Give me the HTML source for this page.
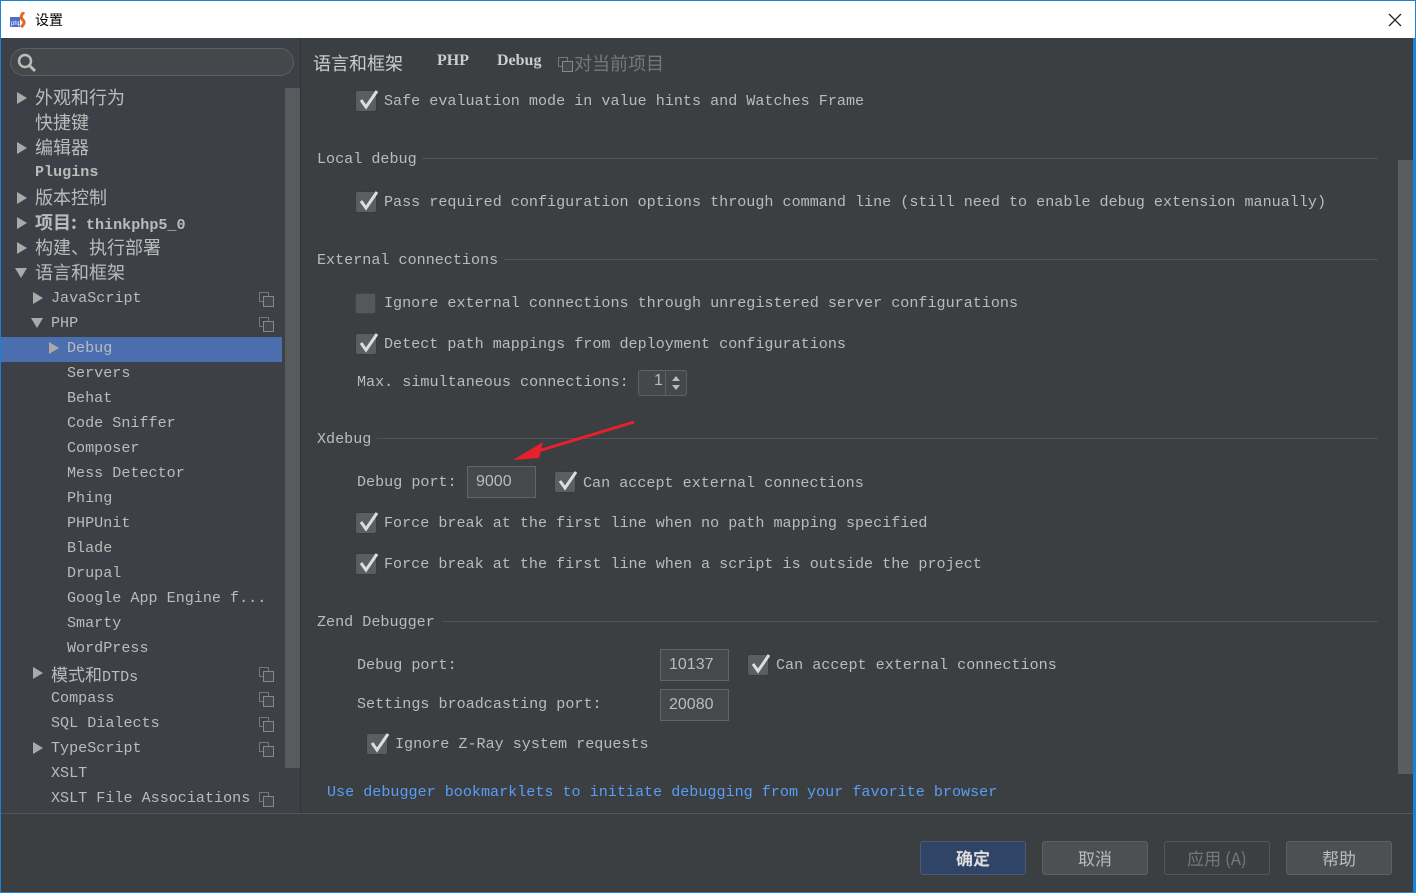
<!DOCTYPE html>
<html><head><meta charset="utf-8"><style>
*{margin:0;padding:0;box-sizing:border-box}
body{width:1416px;height:893px;position:relative;overflow:hidden;background:#3c3f41;font-family:"Liberation Mono","Noto Sans CJK SC",monospace;color:#bbbbbb;font-size:15px}
.a{position:absolute;white-space:nowrap}
#title{left:0;top:0;width:1416px;height:38px;background:#fff;border:1px solid #1883d7;border-bottom:none}
#frame{left:0;top:38px;width:1416px;height:855px;border:1px solid #1883d7;border-top:none}
#side{left:1px;top:38px;width:300px;height:775px;background:#3d4147}
.si{position:absolute;height:25px;line-height:25px;font-size:15.1px}
.cn{font-family:"Noto Sans CJK SC",sans-serif;font-size:18px}
.tri{position:absolute;width:0;height:0;border-top:6px solid transparent;border-bottom:6px solid transparent;border-left:10px solid #aaa}
.trd{position:absolute;width:0;height:0;border-left:6px solid transparent;border-right:6px solid transparent;border-top:10px solid #aaa}
.cp{position:absolute;width:13px;height:13px}
.cp:before{content:"";position:absolute;left:0;top:0;width:8px;height:8px;border:1px solid #777}
.cp:after{content:"";position:absolute;left:4px;top:4px;width:9px;height:9px;border:1px solid #888;background:#45484c}
.cb{position:absolute;width:22px;height:22px;background:#5b5e61;border:1px solid #3a3a3a;border-radius:3px}
.cb svg{position:absolute;left:1px;top:-3px}
.cbe{position:absolute;width:21px;height:21px;background:#55585b;border:1px solid #444;border-radius:3px}
.t{position:absolute;white-space:nowrap;font-size:15.1px}
.sec{position:absolute;height:1px;background:#515456}
.fld{position:absolute;border:1px solid #646464;background:#45494a;color:#bbb;font-size:16px;padding-left:8px;font-family:"Liberation Sans",sans-serif}
.btn{position:absolute;top:841px;width:106px;height:34px;border:1px solid #5e6060;border-radius:3px;background:#4c5052;text-align:center;line-height:32px;font-family:"Noto Sans CJK SC",sans-serif;font-size:17px}
</style></head><body>
<div class="a" id="title">
 <svg style="position:absolute;left:9px;top:11px" width="18" height="16"><rect x="0" y="5" width="10" height="10" fill="#4a6fc9"/><text x="1" y="13" font-size="6" fill="#fff" font-family="Liberation Sans">php</text><path d="M14 0 Q9 5 13 8 Q16 11 11 15" stroke="#e8641e" stroke-width="3" fill="none"/></svg>
 <div class="a" style="left:34px;top:9px;font-family:'Noto Sans CJK SC',sans-serif;font-size:14px;color:#000">设置</div>
 <svg style="position:absolute;left:1387px;top:12px" width="14" height="14"><path d="M1 1L13 13M13 1L1 13" stroke="#222" stroke-width="1.3"/></svg>
</div>
<div class="a" id="frame"></div>
<div class="a" id="side">
 <div class="a" style="left:9px;top:10px;width:284px;height:28px;border:1px solid #5c5f61;border-radius:14px;background:#45484a"></div>
 <svg class="a" style="left:16px;top:15px" width="22" height="20"><circle cx="8" cy="8" r="6" stroke="#bbb" stroke-width="2.5" fill="none"/><path d="M12 12L18 18" stroke="#bbb" stroke-width="3"/></svg>
 <div class="a" style="left:284px;top:50px;width:15px;height:680px;background:#585b5e"></div>
 <div class="a" style="left:299px;top:0;width:1px;height:775px;background:#333"></div>
 <div class="a" style="left:0;top:299px;width:281px;height:25px;background:#4b6eaf"></div>
</div>
<div class="a" style="left:0;top:0">
 <div class="tri" style="left:17px;top:92px"></div><div class="si cn" style="left:35px;top:85px">外观和行为</div>
 <div class="si cn" style="left:35px;top:110px">快捷键</div>
 <div class="tri" style="left:17px;top:142px"></div><div class="si cn" style="left:35px;top:135px">编辑器</div>
 <div class="si" style="left:35px;top:160px;font-weight:bold">Plugins</div>
 <div class="tri" style="left:17px;top:192px"></div><div class="si cn" style="left:35px;top:185px">版本控制</div>
 <div class="tri" style="left:17px;top:217px"></div><div class="si" style="left:35px;top:210px;font-weight:bold"><span class="cn">项目:</span> thinkphp5_0</div>
 <div class="tri" style="left:17px;top:242px"></div><div class="si cn" style="left:35px;top:235px">构建、执行部署</div>
 <div class="trd" style="left:15px;top:268px"></div><div class="si cn" style="left:35px;top:260px">语言和框架</div>
 <div class="tri" style="left:33px;top:292px"></div><div class="si" style="left:51px;top:286px">JavaScript</div><div class="cp" style="left:259px;top:292px"></div>
 <div class="trd" style="left:31px;top:318px"></div><div class="si" style="left:51px;top:311px">PHP</div><div class="cp" style="left:259px;top:317px"></div>
 <div class="tri" style="left:49px;top:342px"></div><div class="si" style="left:67px;top:336px">Debug</div>
 <div class="si" style="left:67px;top:361px">Servers</div>
 <div class="si" style="left:67px;top:386px">Behat</div>
 <div class="si" style="left:67px;top:411px">Code Sniffer</div>
 <div class="si" style="left:67px;top:436px">Composer</div>
 <div class="si" style="left:67px;top:461px">Mess Detector</div>
 <div class="si" style="left:67px;top:486px">Phing</div>
 <div class="si" style="left:67px;top:511px">PHPUnit</div>
 <div class="si" style="left:67px;top:536px">Blade</div>
 <div class="si" style="left:67px;top:561px">Drupal</div>
 <div class="si" style="left:67px;top:586px">Google App Engine f...</div>
 <div class="si" style="left:67px;top:611px">Smarty</div>
 <div class="si" style="left:67px;top:636px">WordPress</div>
 <div class="tri" style="left:33px;top:667px"></div><div class="si" style="left:51px;top:661px"><span class="cn" style="font-size:17px">模式和</span>DTDs</div><div class="cp" style="left:259px;top:667px"></div>
 <div class="si" style="left:51px;top:686px">Compass</div><div class="cp" style="left:259px;top:692px"></div>
 <div class="si" style="left:51px;top:711px">SQL Dialects</div><div class="cp" style="left:259px;top:717px"></div>
 <div class="tri" style="left:33px;top:742px"></div><div class="si" style="left:51px;top:736px">TypeScript</div><div class="cp" style="left:259px;top:742px"></div>
 <div class="si" style="left:51px;top:761px">XSLT</div>
 <div class="si" style="left:51px;top:786px">XSLT File Associations</div><div class="cp" style="left:259px;top:792px"></div>
</div>
<div class="a cn" style="left:313px;top:50px;font-size:18px;color:#ccc">语言和框架</div>
<div class="a" style="left:437px;top:52px;font-size:16px;font-weight:bold;color:#ccc;font-family:'Liberation Serif',serif">PHP</div>
<div class="a" style="left:497px;top:52px;font-size:16px;font-weight:bold;color:#ccc;font-family:'Liberation Serif',serif">Debug</div>
<div class="cp" style="left:558px;top:57px"></div>
<div class="a cn" style="left:574px;top:50px;font-size:18px;color:#777">对当前项目</div>
<div class="a" style="left:1398px;top:160px;width:15px;height:614px;background:#5a5d60"></div>
<div class="a" style="left:1413px;top:38px;width:3px;height:855px;background:#1883d7"></div>
<div class="cb" style="left:355px;top:90px"><svg width="24" height="24"><path d="M4 12 L9 19 L20 3" stroke="#ddd" stroke-width="3" fill="none"/></svg></div>
<div class="t" style="left:384px;top:92px">Safe evaluation mode in value hints and Watches Frame</div>
<div class="t" style="left:317px;top:150px">Local debug</div><div class="sec" style="left:422px;top:158px;width:956px"></div>
<div class="cb" style="left:355px;top:191px"><svg width="24" height="24"><path d="M4 12 L9 19 L20 3" stroke="#ddd" stroke-width="3" fill="none"/></svg></div>
<div class="t" style="left:384px;top:193px">Pass required configuration options through command line (still need to enable debug extension manually)</div>
<div class="t" style="left:317px;top:251px">External connections</div><div class="sec" style="left:504px;top:259px;width:874px"></div>
<div class="cbe" style="left:355px;top:293px"></div>
<div class="t" style="left:384px;top:294px">Ignore external connections through unregistered server configurations</div>
<div class="cb" style="left:355px;top:333px"><svg width="24" height="24"><path d="M4 12 L9 19 L20 3" stroke="#ddd" stroke-width="3" fill="none"/></svg></div>
<div class="t" style="left:384px;top:335px">Detect path mappings from deployment configurations</div>
<div class="t" style="left:357px;top:373px">Max. simultaneous connections:</div>
<div class="a" style="left:638px;top:370px;width:49px;height:26px;border:1px solid #5e6162;border-radius:3px;background:#45484a"></div>
<div class="a" style="left:654px;top:372px;font-family:'Liberation Sans';font-size:16px">1</div>
<div class="a" style="left:665px;top:371px;width:1px;height:24px;background:#5e6162"></div>
<svg class="a" style="left:670px;top:375px" width="12" height="16"><path d="M2 6L6 1L10 6Z M2 10L6 15L10 10Z" fill="#bbb"/></svg>
<div class="t" style="left:317px;top:430px">Xdebug</div><div class="sec" style="left:377px;top:438px;width:1001px"></div>
<div class="t" style="left:357px;top:473px">Debug port:</div>
<div class="fld" style="left:467px;top:466px;width:69px;height:32px;line-height:30px">9000</div>
<div class="cb" style="left:554px;top:471px"><svg width="24" height="24"><path d="M4 12 L9 19 L20 3" stroke="#ddd" stroke-width="3" fill="none"/></svg></div>
<div class="t" style="left:583px;top:474px">Can accept external connections</div>
<div class="cb" style="left:355px;top:512px"><svg width="24" height="24"><path d="M4 12 L9 19 L20 3" stroke="#ddd" stroke-width="3" fill="none"/></svg></div>
<div class="t" style="left:384px;top:514px">Force break at the first line when no path mapping specified</div>
<div class="cb" style="left:355px;top:553px"><svg width="24" height="24"><path d="M4 12 L9 19 L20 3" stroke="#ddd" stroke-width="3" fill="none"/></svg></div>
<div class="t" style="left:384px;top:555px">Force break at the first line when a script is outside the project</div>
<svg class="a" style="left:505px;top:418px" width="135" height="50"><path d="M129 4 L30 34" stroke="#e8202a" stroke-width="3"/><path d="M8 42 L38 24 L34 40 Z" fill="#e8202a"/></svg>
<div class="t" style="left:317px;top:613px">Zend Debugger</div><div class="sec" style="left:442px;top:621px;width:936px"></div>
<div class="t" style="left:357px;top:656px">Debug port:</div>
<div class="fld" style="left:660px;top:649px;width:69px;height:32px;line-height:30px">10137</div>
<div class="cb" style="left:747px;top:654px"><svg width="24" height="24"><path d="M4 12 L9 19 L20 3" stroke="#ddd" stroke-width="3" fill="none"/></svg></div>
<div class="t" style="left:776px;top:656px">Can accept external connections</div>
<div class="t" style="left:357px;top:695px">Settings broadcasting port:</div>
<div class="fld" style="left:660px;top:689px;width:69px;height:32px;line-height:30px">20080</div>
<div class="cb" style="left:366px;top:733px"><svg width="24" height="24"><path d="M4 12 L9 19 L20 3" stroke="#ddd" stroke-width="3" fill="none"/></svg></div>
<div class="t" style="left:395px;top:735px">Ignore Z-Ray system requests</div>
<div class="t" style="left:327px;top:783px;color:#589df6">Use debugger bookmarklets to initiate debugging from your favorite browser</div>
<div class="a" style="left:1px;top:813px;width:1412px;height:1px;background:#555"></div>
<div class="btn" style="left:920px;background:#2f4466;border-color:#4a5a70;color:#ddd;font-weight:bold">确定</div>
<div class="btn" style="left:1042px">取消</div>
<div class="btn" style="left:1164px;background:#3c3f41;border-color:#555;color:#777">应用 (A)</div>
<div class="btn" style="left:1286px">帮助</div>
</body></html>
